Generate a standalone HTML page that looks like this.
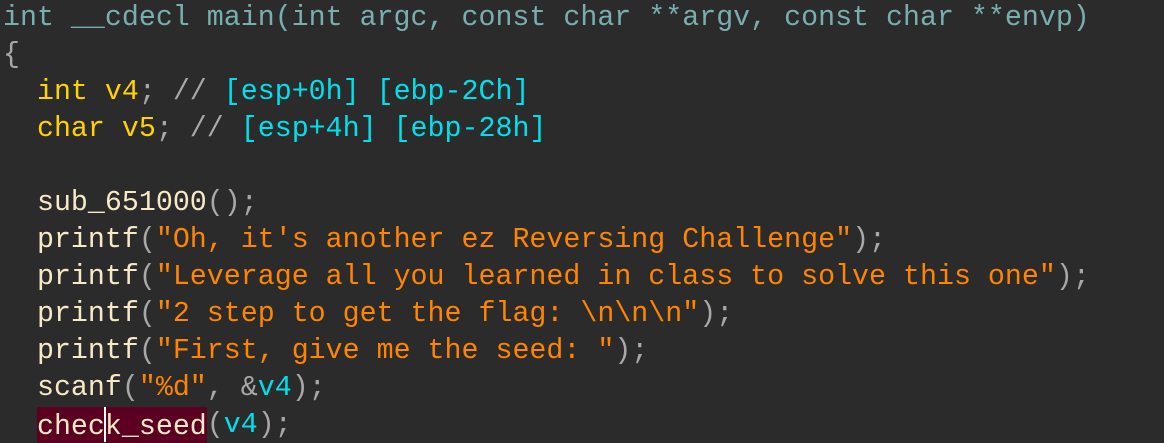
<!DOCTYPE html>
<html><head><meta charset="utf-8"><style>
html,body{margin:0;padding:0;background:#2b2b2b;width:1164px;height:443px;overflow:hidden}
pre{margin:0;padding:0 0 0 3px;font-family:"Liberation Mono",monospace;font-size:28.3px;line-height:37px;color:#b8b8b8;white-space:pre}
.h{color:#79aeae}.y{color:#ffd200}.c{color:#00e0ec}.f{color:#f7e9c6}.s{color:#ff8500}.p{color:#a8a8a8}
.hl{background:#5c0022;display:inline-block;height:37px;vertical-align:top}
.cur{display:inline-block;width:2px;height:35px;background:#fff;vertical-align:-8px;margin:0 -1px}
</style></head><body><pre><span class="h">int __cdecl main(int argc, const char **argv, const char **envp)</span>
<span class="p">{</span>
  <span class="y">int v4</span><span class="p">; // </span><span class="c">[esp+0h] [ebp-2Ch]</span>
  <span class="y">char v5</span><span class="p">; // </span><span class="c">[esp+4h] [ebp-28h]</span>

  <span class="f">sub_651000</span><span class="p">();</span>
  <span class="f">printf</span><span class="p">(</span><span class="s">"Oh, it's another ez Reversing Challenge"</span><span class="p">);</span>
  <span class="f">printf</span><span class="p">(</span><span class="s">"Leverage all you learned in class to solve this one"</span><span class="p">);</span>
  <span class="f">printf</span><span class="p">(</span><span class="s">"2 step to get the flag: \n\n\n"</span><span class="p">);</span>
  <span class="f">printf</span><span class="p">(</span><span class="s">"First, give me the seed: "</span><span class="p">);</span>
  <span class="f">scanf</span><span class="p">(</span><span class="s">"%d"</span><span class="p">, &amp;</span><span class="c">v4</span><span class="p">);</span>
  <span class="f hl">chec<span class="cur"></span>k_seed</span><span class="p">(</span><span class="c">v4</span><span class="p">);</span></pre></body></html>
